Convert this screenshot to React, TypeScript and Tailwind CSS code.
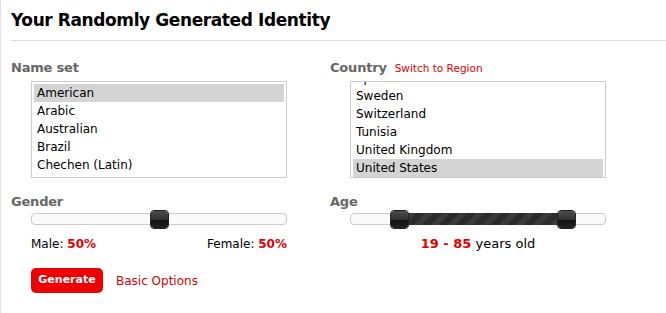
import React from "react";

const nameSets = ["American", "Arabic", "Australian", "Brazil", "Chechen (Latin)"];
const countries = ["Spain", "Sweden", "Switzerland", "Tunisia", "United Kingdom", "United States"];

const Handle = ({ left }: { left: number }) => (
  <div
    className="absolute top-[-4px] w-[19px] h-[19px] rounded-[4px] border border-[#222] overflow-hidden flex flex-col"
    style={{ left: left - 10 }}
  >
    <div className="h-1/2 bg-gradient-to-b from-[#4a4a4a] to-[#333]" />
    <div className="h-1/2 bg-gradient-to-b from-[#111] to-[#222]" />
  </div>
);

const App: React.FC = () => {
  return (
    <div
      className="w-[666px] h-[313px] bg-white border-l border-[#e2e2e2] pl-[10px] text-[12px] text-black overflow-hidden"
      style={{ fontFamily: '"DejaVu Sans", Verdana, sans-serif' }}
    >
      <h1 className="pt-[10px] pb-[9px] text-[17px] leading-[21px] font-bold tracking-[-0.4px] border-b border-[#ddd]">
        Your Randomly Generated Identity
      </h1>

      <div className="grid grid-cols-[319px_1fr] pt-[19px]">
        {/* left column */}
        <div>
          <div className="h-[16px] text-[13px] leading-[16px] font-bold text-[#666] tracking-[-0.2px]">Name set</div>
          <div className="ml-[20px] mt-[5px] w-[256px] h-[97px] border border-[#ccc] p-[2px]">
            {nameSets.map((n, i) => (
              <div key={n} className={`h-[18px] leading-[18px] pl-[3px] ${i === 0 ? "bg-[#d4d4d4]" : ""}`}>
                {n}
              </div>
            ))}
          </div>

          <div className="mt-[16px] text-[13px] leading-[16px] font-bold text-[#666] tracking-[-0.2px]">Gender</div>
          <div className="ml-[20px] mt-[3px] w-[256px] h-[12px] relative rounded-[4px] border border-[#ccc] bg-[#fafafa]">
            <Handle left={128} />
          </div>
          <div className="ml-[20px] mt-[11px] w-[256px] flex justify-between leading-[16px]">
            <span>
              Male: <b className="text-[#e00000]">50%</b>
            </span>
            <span>
              Female: <b className="text-[#e00000]">50%</b>
            </span>
          </div>

          <div className="ml-[20px] mt-[16px] flex items-center gap-[13px]">
            <button className="w-[72px] h-[25px] rounded-[5px] bg-[#ee0000] text-white text-[11px] font-bold">
              Generate
            </button>
            <span className="text-[#d10000]">Basic Options</span>
          </div>
        </div>

        {/* right column */}
        <div>
          <div className="h-[16px] flex items-baseline gap-[8px] leading-[16px]">
            <span className="text-[13px] font-bold text-[#666] tracking-[-0.2px]">Country</span>
            <span className="text-[10.5px] text-[#e00000]">Switch to Region</span>
          </div>
          <div className="ml-[20px] mt-[5px] w-[256px] h-[97px] border border-[#ccc] px-[2px] overflow-hidden">
            <div className="mt-[-13px]">
              {countries.map((c, i) => (
                <div
                  key={c}
                  className={`h-[18px] leading-[18px] pl-[3px] ${i === countries.length - 1 ? "bg-[#d4d4d4]" : ""}`}
                >
                  {c}
                </div>
              ))}
            </div>
          </div>

          <div className="mt-[16px] text-[13px] leading-[16px] font-bold text-[#666] tracking-[-0.2px]">Age</div>
          <div className="ml-[20px] mt-[3px] w-[256px] h-[12px] relative rounded-[4px] border border-[#ccc] bg-[#fafafa]">
            <div
              className="absolute top-[-1px] h-[12px] left-[49px] w-[167px] bg-[repeating-linear-gradient(135deg,#2b2b2b_0px,#2b2b2b_6px,#3a3a3a_6px,#3a3a3a_12px)]"
            />
            <Handle left={49} />
            <Handle left={216} />
          </div>
          <div className="ml-[20px] mt-[11px] w-[256px] text-center text-[13px] leading-[16px]">
            <b className="text-[#e00000]">19 - 85</b> years old
          </div>
        </div>
      </div>
    </div>
  );
};

export default App;
